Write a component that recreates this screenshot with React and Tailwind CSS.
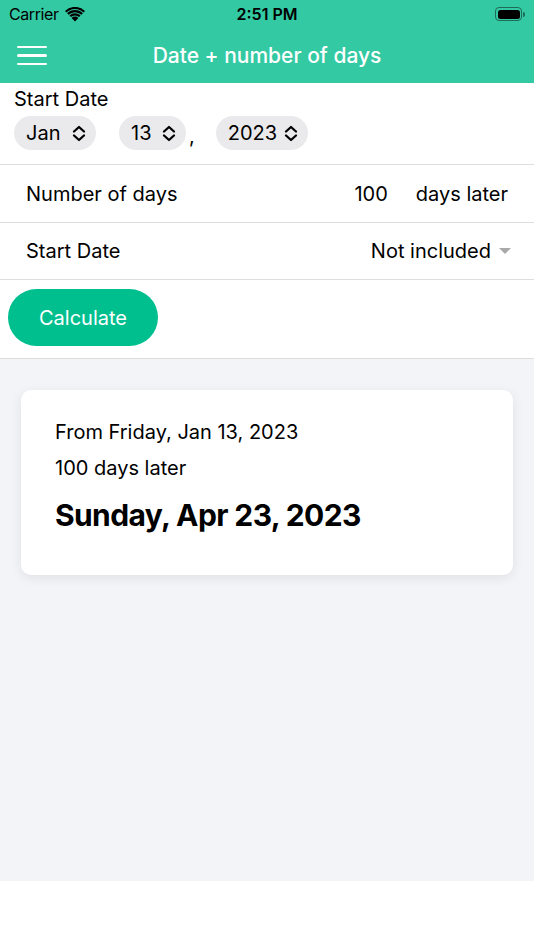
import { useState } from "react";

const Chevrons = () => (
    <svg width="14" height="17" viewBox="0 0 14 17" fill="none" stroke="currentColor" strokeWidth="2.3" strokeLinecap="round" strokeLinejoin="round">
        <path d="M2 6.5 L7 2 L12 6.5" />
        <path d="M2 10.5 L7 15 L12 10.5" />
    </svg>
);

const Picker = ({ value, width }) => (
    <div className={`h-[34px] ${width} rounded-full bg-[#eaeaec] flex items-center justify-between pl-3 pr-[10px]`}>
        <span className="text-[20px] leading-none text-black">{value}</span>
        <Chevrons />
    </div>
);

const App = () => {
    const [days] = useState(100);

    return (
        <div className="w-[534px] h-[950px] bg-white flex flex-col" style={{ fontFamily: "Inter, 'Noto Sans', sans-serif" }}>
            {/* header */}
            <div className="bg-[#33c9a3]">
                <div className="h-[28px] flex items-center justify-between px-[9px] relative">
                    <div className="flex items-center gap-[6px]">
                        <span className="text-[16px] text-black tracking-tight">Carrier</span>
                        <svg width="20" height="15" viewBox="0 0 20 15">
                            <path d="M10 14.5 L6.6 10.9 A4.8 4.8 0 0 1 13.4 10.9 Z" fill="black" />
                            <path d="M4.4 8.6 A8 8 0 0 1 15.6 8.6 L14.1 10.1 A5.9 5.9 0 0 0 5.9 10.1 Z" fill="black" />
                            <path d="M2.1 6.3 A11.2 11.2 0 0 1 17.9 6.3 L16.4 7.8 A9.1 9.1 0 0 0 3.6 7.8 Z" fill="black" />
                            <path d="M0 4 A14.2 14.2 0 0 1 20 4 L18.6 5.5 A12.2 12.2 0 0 0 1.4 5.5 Z" fill="black" />
                        </svg>
                    </div>
                    <span className="absolute left-1/2 -translate-x-1/2 text-[16px] font-semibold text-black">2:51 PM</span>
                    <div className="flex items-center">
                        <div className="w-[27px] h-[14px] rounded-[4px] border border-[#1f6b58] p-[1.5px]">
                            <div className="w-full h-full rounded-[2.5px] bg-black"></div>
                        </div>
                        <div className="w-[2px] h-[5px] rounded-r-sm bg-[#1f6b58] ml-[1px]"></div>
                    </div>
                </div>
                <div className="h-[55px] flex items-center relative px-[17px]">
                    <div className="flex flex-col gap-[6px]">
                        <div className="w-[30px] h-[2.5px] bg-white rounded"></div>
                        <div className="w-[30px] h-[2.5px] bg-white rounded"></div>
                        <div className="w-[30px] h-[2.5px] bg-white rounded"></div>
                    </div>
                    <h1 className="absolute left-1/2 -translate-x-1/2 text-[21px] font-medium text-white whitespace-nowrap">Date + number of days</h1>
                </div>
            </div>

            {/* start date pickers */}
            <div className="px-[14px] pt-[4px] pb-[14px] border-b border-[#dedede]">
                <p className="text-[20px] leading-[24px] text-black">Start Date</p>
                <div className="flex items-end mt-[5px]">
                    <Picker value="Jan" width="w-[82px]" />
                    <div className="ml-[23px]"><Picker value="13" width="w-[67px]" /></div>
                    <span className="text-[20px] leading-none ml-[3px] mb-[4px]">,</span>
                    <div className="ml-[21px]"><Picker value="2023" width="w-[92px]" /></div>
                </div>
            </div>

            {/* number of days */}
            <div className="h-[58px] px-[26px] flex items-center justify-between border-b border-[#dedede]">
                <span className="text-[20px] text-black">Number of days</span>
                <div className="flex items-center gap-[28px]">
                    <span className="text-[20px] text-black">{days}</span>
                    <span className="text-[20px] text-black">days later</span>
                </div>
            </div>

            {/* start date included */}
            <div className="h-[57px] px-[23px] flex items-center justify-between border-b border-[#dedede]">
                <span className="text-[20px] text-black pl-[3px]">Start Date</span>
                <div className="flex items-center gap-[8px]">
                    <span className="text-[20px] text-black">Not included</span>
                    <svg width="12" height="7" viewBox="0 0 12 7"><path d="M0 0 L12 0 L6 6 Z" fill="#a9a9a9" /></svg>
                </div>
            </div>

            {/* calculate */}
            <div className="px-[8px] pt-[9px] pb-[12px] border-b border-[#dedede]">
                <button className="w-[150px] h-[57px] rounded-full bg-[#00bf8f] text-white text-[20px]">Calculate</button>
            </div>

            {/* result */}
            <div className="bg-[#f3f4f8] h-[522px] px-[21px] pt-[31px]">
                <div className="bg-white rounded-[10px] shadow-[0_3px_12px_rgba(0,0,0,0.08)] h-[185px] px-[34px] pt-[28px]">
                    <p className="text-[20px] leading-[28px] text-black">From Friday, Jan 13, 2023</p>
                    <p className="text-[20px] leading-[28px] text-black mt-[8px]">{days} days later</p>
                    <p className="text-[30px] leading-[36px] font-bold text-black mt-[15px] tracking-[-0.6px]">Sunday, Apr 23, 2023</p>
                </div>
            </div>
        </div>
    );
};

export default App;
